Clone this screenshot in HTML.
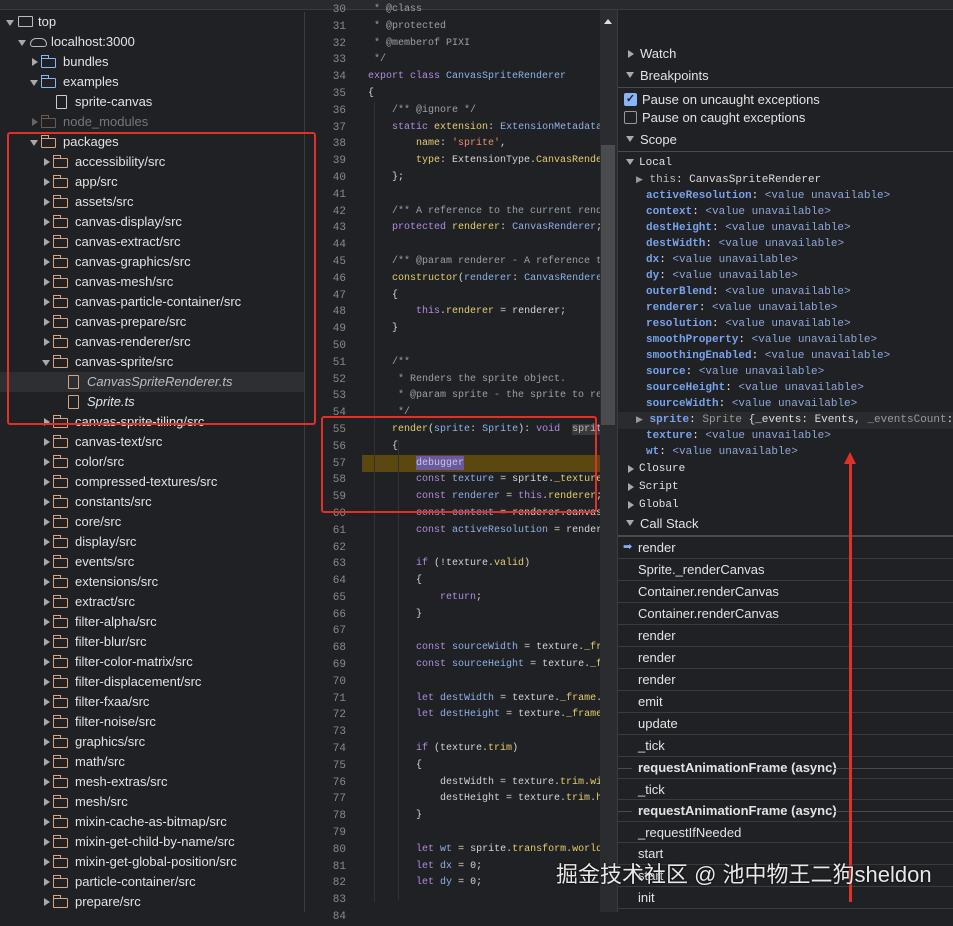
<!DOCTYPE html>
<html><head><meta charset="utf-8"><style>
*{margin:0;padding:0;box-sizing:border-box}
body{width:953px;height:912px;overflow:hidden;background:#202124;font-family:"Liberation Sans",sans-serif;color:#e3e3e3;position:relative}
.abs{position:absolute}
#top{left:0;top:0;width:953px;height:10px;background:#292a2d;border-bottom:1px solid #3c3c3c}
#tree{left:0;top:12px;width:305px;height:900px;background:#202124;border-right:1px solid #3c3c3c;overflow:hidden}
.r{position:absolute;left:0;right:0;height:20px;font-size:13px;line-height:20px;white-space:nowrap}
.r span.t{position:absolute}
.ar{position:absolute;top:6px;width:0;height:0;border-left:6px solid #a9a9a9;border-top:4px solid transparent;border-bottom:4px solid transparent}
.dn{position:absolute;top:8px;width:0;height:0;border-top:6px solid #a9a9a9;border-left:4px solid transparent;border-right:4px solid transparent}
.f{position:absolute;top:6px;width:15px;height:10px;border:1.5px solid #d9a37f;border-radius:1px}
.f::before{content:"";position:absolute;left:-1.5px;top:-4px;width:6px;height:3px;border:1.5px solid;border-color:inherit;border-bottom:none}
.fb{border-color:#8ab4f8}
.fi{position:absolute;top:3px;width:11px;height:14px;border:1.5px solid #d9a37f;border-radius:1px}
#code{left:306px;top:10px;width:294px;height:902px;background:#202124;overflow:hidden}
#gut{left:306px;top:2px;width:40px;text-align:right;font-family:"Liberation Mono",monospace;font-size:11px;line-height:16.8px;color:#8a8a8a}
#src{left:368px;top:2px;width:232px;font-family:"Liberation Mono",monospace;font-size:10px;line-height:16.8px;color:#d4d4d4;white-space:pre;overflow:hidden}
.k{color:#b08be0}.c{color:#9aa0a6}.n{color:#8fb0e6}.p{color:#e4cd6e}.s{color:#ee8a6a}
#sb{left:600px;top:10px;width:17px;height:902px;background:#2b2c2f}
#right{left:617px;top:10px;width:336px;height:902px;background:#202124;border-left:1px solid #3c3c3c;overflow:hidden}
.h{position:absolute;left:0;right:0;font-size:13px;line-height:18px}
.h .ar,.h .dn{top:5px}
.sep{position:absolute;left:0;right:0;height:1px;background:#4a4a4a}
.mono{font-family:"Liberation Mono",monospace;font-size:11px}
#scope{position:absolute;left:28px;top:162px;line-height:16px;white-space:nowrap}
#scope b{color:#7aa2e8}
#scope i{font-style:normal;color:#8fa6d6}
.cs{position:absolute;left:0;right:0;height:22px;border-bottom:1px solid #3a3b3e;font-size:13px;line-height:21px;padding-left:20px;white-space:nowrap}
.cs.b{font-weight:bold;border-bottom:none}
.cs.b::before{content:"";position:absolute;left:0;width:14px;top:11px;height:1px;background:#4a4a4a}
.cs.b::after{content:"";position:absolute;left:216px;right:0;top:11px;height:1px;background:#4a4a4a}
.red{position:absolute;border:2.5px solid #e0302a;border-radius:3px}
</style></head><body>
<div id="top" class="abs"></div>

<div id="tree" class="abs">
<div class="r" style="top:0px"><div class="dn" style="left:6px"></div><div class="abs" style="left:18px;top:4px;width:15px;height:11px;border:1.5px solid #bbb;border-radius:1px"></div><span class="t" style="left:38px">top</span></div>
<div class="r" style="top:20px"><div class="dn" style="left:18px"></div><div class="abs" style="left:30px;top:6px;width:17px;height:9px;border:1.5px solid #bbb;border-radius:6px 6px 3px 3px"></div><span class="t" style="left:51px">localhost:3000</span></div>
<div class="r" style="top:40px"><div class="ar" style="left:32px"></div><div class="f fb" style="left:41px"></div><span class="t" style="left:63px">bundles</span></div>
<div class="r" style="top:60px"><div class="dn" style="left:30px"></div><div class="f fb" style="left:41px"></div><span class="t" style="left:63px">examples</span></div>
<div class="r" style="top:80px"><div class="fi" style="left:56px;border-color:#ccc"></div><span class="t" style="left:75px">sprite-canvas</span></div>
<div class="r" style="top:100px;color:#777"><div class="ar" style="left:32px;border-left-color:#666"></div><div class="f" style="left:41px;border-color:#6d5a4d"></div><span class="t" style="left:63px">node_modules</span></div>
<div class="r" style="top:120px"><div class="dn" style="left:30px"></div><div class="f" style="left:41px"></div><span class="t" style="left:63px">packages</span></div>
<div class="r" style="top:140px"><div class="ar" style="left:44px"></div><div class="f" style="left:53px"></div><span class="t" style="left:75px">accessibility/src</span></div>
<div class="r" style="top:160px"><div class="ar" style="left:44px"></div><div class="f" style="left:53px"></div><span class="t" style="left:75px">app/src</span></div>
<div class="r" style="top:180px"><div class="ar" style="left:44px"></div><div class="f" style="left:53px"></div><span class="t" style="left:75px">assets/src</span></div>
<div class="r" style="top:200px"><div class="ar" style="left:44px"></div><div class="f" style="left:53px"></div><span class="t" style="left:75px">canvas-display/src</span></div>
<div class="r" style="top:220px"><div class="ar" style="left:44px"></div><div class="f" style="left:53px"></div><span class="t" style="left:75px">canvas-extract/src</span></div>
<div class="r" style="top:240px"><div class="ar" style="left:44px"></div><div class="f" style="left:53px"></div><span class="t" style="left:75px">canvas-graphics/src</span></div>
<div class="r" style="top:260px"><div class="ar" style="left:44px"></div><div class="f" style="left:53px"></div><span class="t" style="left:75px">canvas-mesh/src</span></div>
<div class="r" style="top:280px"><div class="ar" style="left:44px"></div><div class="f" style="left:53px"></div><span class="t" style="left:75px">canvas-particle-container/src</span></div>
<div class="r" style="top:300px"><div class="ar" style="left:44px"></div><div class="f" style="left:53px"></div><span class="t" style="left:75px">canvas-prepare/src</span></div>
<div class="r" style="top:320px"><div class="ar" style="left:44px"></div><div class="f" style="left:53px"></div><span class="t" style="left:75px">canvas-renderer/src</span></div>
<div class="r" style="top:340px"><div class="dn" style="left:42px"></div><div class="f" style="left:53px"></div><span class="t" style="left:75px">canvas-sprite/src</span></div>
<div class="r" style="top:360px;background:#2e2f33;color:#bdbdbd;font-style:italic"><div class="fi" style="left:68px"></div><span class="t" style="left:87px">CanvasSpriteRenderer.ts</span></div>
<div class="r" style="top:380px;font-style:italic"><div class="fi" style="left:68px"></div><span class="t" style="left:87px">Sprite.ts</span></div>
<div class="r" style="top:400px"><div class="ar" style="left:44px"></div><div class="f" style="left:53px"></div><span class="t" style="left:75px">canvas-sprite-tiling/src</span></div>
<div class="r" style="top:420px"><div class="ar" style="left:44px"></div><div class="f" style="left:53px"></div><span class="t" style="left:75px">canvas-text/src</span></div>
<div class="r" style="top:440px"><div class="ar" style="left:44px"></div><div class="f" style="left:53px"></div><span class="t" style="left:75px">color/src</span></div>
<div class="r" style="top:460px"><div class="ar" style="left:44px"></div><div class="f" style="left:53px"></div><span class="t" style="left:75px">compressed-textures/src</span></div>
<div class="r" style="top:480px"><div class="ar" style="left:44px"></div><div class="f" style="left:53px"></div><span class="t" style="left:75px">constants/src</span></div>
<div class="r" style="top:500px"><div class="ar" style="left:44px"></div><div class="f" style="left:53px"></div><span class="t" style="left:75px">core/src</span></div>
<div class="r" style="top:520px"><div class="ar" style="left:44px"></div><div class="f" style="left:53px"></div><span class="t" style="left:75px">display/src</span></div>
<div class="r" style="top:540px"><div class="ar" style="left:44px"></div><div class="f" style="left:53px"></div><span class="t" style="left:75px">events/src</span></div>
<div class="r" style="top:560px"><div class="ar" style="left:44px"></div><div class="f" style="left:53px"></div><span class="t" style="left:75px">extensions/src</span></div>
<div class="r" style="top:580px"><div class="ar" style="left:44px"></div><div class="f" style="left:53px"></div><span class="t" style="left:75px">extract/src</span></div>
<div class="r" style="top:600px"><div class="ar" style="left:44px"></div><div class="f" style="left:53px"></div><span class="t" style="left:75px">filter-alpha/src</span></div>
<div class="r" style="top:620px"><div class="ar" style="left:44px"></div><div class="f" style="left:53px"></div><span class="t" style="left:75px">filter-blur/src</span></div>
<div class="r" style="top:640px"><div class="ar" style="left:44px"></div><div class="f" style="left:53px"></div><span class="t" style="left:75px">filter-color-matrix/src</span></div>
<div class="r" style="top:660px"><div class="ar" style="left:44px"></div><div class="f" style="left:53px"></div><span class="t" style="left:75px">filter-displacement/src</span></div>
<div class="r" style="top:680px"><div class="ar" style="left:44px"></div><div class="f" style="left:53px"></div><span class="t" style="left:75px">filter-fxaa/src</span></div>
<div class="r" style="top:700px"><div class="ar" style="left:44px"></div><div class="f" style="left:53px"></div><span class="t" style="left:75px">filter-noise/src</span></div>
<div class="r" style="top:720px"><div class="ar" style="left:44px"></div><div class="f" style="left:53px"></div><span class="t" style="left:75px">graphics/src</span></div>
<div class="r" style="top:740px"><div class="ar" style="left:44px"></div><div class="f" style="left:53px"></div><span class="t" style="left:75px">math/src</span></div>
<div class="r" style="top:760px"><div class="ar" style="left:44px"></div><div class="f" style="left:53px"></div><span class="t" style="left:75px">mesh-extras/src</span></div>
<div class="r" style="top:780px"><div class="ar" style="left:44px"></div><div class="f" style="left:53px"></div><span class="t" style="left:75px">mesh/src</span></div>
<div class="r" style="top:800px"><div class="ar" style="left:44px"></div><div class="f" style="left:53px"></div><span class="t" style="left:75px">mixin-cache-as-bitmap/src</span></div>
<div class="r" style="top:820px"><div class="ar" style="left:44px"></div><div class="f" style="left:53px"></div><span class="t" style="left:75px">mixin-get-child-by-name/src</span></div>
<div class="r" style="top:840px"><div class="ar" style="left:44px"></div><div class="f" style="left:53px"></div><span class="t" style="left:75px">mixin-get-global-position/src</span></div>
<div class="r" style="top:860px"><div class="ar" style="left:44px"></div><div class="f" style="left:53px"></div><span class="t" style="left:75px">particle-container/src</span></div>
<div class="r" style="top:880px"><div class="ar" style="left:44px"></div><div class="f" style="left:53px"></div><span class="t" style="left:75px">prepare/src</span></div>
</div>

<div id="code" class="abs"></div>
<div class="abs" style="left:362px;top:455px;width:238px;height:17px;background:#5a4810"></div>
<div class="abs" style="left:416px;top:456px;width:48px;height:14px;background:#6a5a9c"></div>
<div class="abs" style="left:374px;top:102px;width:1px;height:800px;background:#333"></div>
<div class="abs" style="left:398px;top:440px;width:1px;height:460px;background:#333"></div>
<div id="gut" class="abs">30<br>31<br>32<br>33<br>34<br>35<br>36<br>37<br>38<br>39<br>40<br>41<br>42<br>43<br>44<br>45<br>46<br>47<br>48<br>49<br>50<br>51<br>52<br>53<br>54<br>55<br>56<br>57<br>58<br>59<br>60<br>61<br>62<br>63<br>64<br>65<br>66<br>67<br>68<br>69<br>70<br>71<br>72<br>73<br>74<br>75<br>76<br>77<br>78<br>79<br>80<br>81<br>82<br>83<br>84</div>
<div id="src" class="abs"><span class="c"> * @class</span>
<span class="c"> * @protected</span>
<span class="c"> * @memberof PIXI</span>
<span class="c"> */</span>
<span class="k">export class</span> <span class="n">CanvasSpriteRenderer</span>
{
    <span class="c">/** @ignore */</span>
    <span class="k">static</span> <span class="p">extension</span>: <span class="n">ExtensionMetadata</span> = {
        <span class="p">name</span>: <span class="s">'sprite'</span>,
        <span class="p">type</span>: ExtensionType.<span class="p">CanvasRenderer</span>
    };

    <span class="c">/** A reference to the current renderer */</span>
    <span class="k">protected</span> <span class="p">renderer</span>: <span class="n">CanvasRenderer</span>;

    <span class="c">/** @param renderer - A reference to */</span>
    <span class="p">constructor</span>(<span class="n">renderer</span>: <span class="n">CanvasRenderer</span>)
    {
        <span class="k">this</span>.<span class="p">renderer</span> = renderer;
    }

    <span class="c">/**</span>
<span class="c">     * Renders the sprite object.</span>
<span class="c">     * @param sprite - the sprite to render</span>
<span class="c">     */</span>
    <span class="p">render</span>(<span class="n">sprite</span>: <span class="n">Sprite</span>): <span class="k">void</span>  <span style="background:#3a3a3d;color:#bbb">sprite</span>
    {
        <span style="color:#c9c3e8">debugger</span>
        <span class="k">const</span> <span class="n">texture</span> = sprite.<span class="p">_texture</span>;
        <span class="k">const</span> <span class="n">renderer</span> = <span class="k">this</span>.<span class="p">renderer</span>;
        <span class="k">const</span> <span class="n">context</span> = renderer.canvasContext;
        <span class="k">const</span> <span class="n">activeResolution</span> = renderer;

        <span class="k">if</span> (!texture.<span class="p">valid</span>)
        {
            <span class="k">return</span>;
        }

        <span class="k">const</span> <span class="n">sourceWidth</span> = texture.<span class="p">_frame</span>;
        <span class="k">const</span> <span class="n">sourceHeight</span> = texture.<span class="p">_frame</span>;

        <span class="k">let</span> <span class="n">destWidth</span> = texture.<span class="p">_frame</span>.width;
        <span class="k">let</span> <span class="n">destHeight</span> = texture.<span class="p">_frame</span>.h;

        <span class="k">if</span> (texture.<span class="p">trim</span>)
        {
            destWidth = texture.<span class="p">trim</span>.<span class="p">width</span>;
            destHeight = texture.<span class="p">trim</span>.<span class="p">height</span>;
        }

        <span class="k">let</span> <span class="n">wt</span> = sprite.<span class="p">transform</span>.<span class="p">worldTransform</span>;
        <span class="k">let</span> <span class="n">dx</span> = 0;
        <span class="k">let</span> <span class="n">dy</span> = 0;

</div>
<div id="sb" class="abs"><div class="abs" style="left:1px;top:135px;width:14px;height:280px;background:#4a4b4e"></div><div class="abs" style="left:4px;top:9px;border-bottom:5px solid #ddd;border-left:4px solid transparent;border-right:4px solid transparent;width:0;height:0"></div></div>

<div id="right" class="abs">
<div class="h" style="top:35px"><div class="ar" style="left:10px"></div><span class="abs" style="left:22px">Watch</span></div>
<div class="h" style="top:57px"><div class="dn" style="left:8px"></div><span class="abs" style="left:22px">Breakpoints</span></div>
<div class="sep" style="top:77px"></div>
<div class="h" style="top:81px"><div class="abs" style="left:6px;top:2px;width:13px;height:13px;background:#8ab4f8;border-radius:2px;color:#202124;font-size:11px;line-height:13px;text-align:center;font-weight:bold">✓</div><span class="abs" style="left:24px">Pause on uncaught exceptions</span></div>
<div class="h" style="top:99px"><div class="abs" style="left:6px;top:2px;width:13px;height:13px;border:1.5px solid #999;border-radius:2px"></div><span class="abs" style="left:24px">Pause on caught exceptions</span></div>
<div class="h" style="top:121px"><div class="dn" style="left:8px"></div><span class="abs" style="left:22px">Scope</span></div>
<div class="sep" style="top:141px"></div>
<div class="h mono" style="top:144px"><div class="dn" style="left:8px"></div><span class="abs" style="left:21px">Local</span></div>
<div class="abs" style="left:0;right:0;top:402px;height:17px;background:#2a2b2e"></div>
<div id="scope" class="mono"><span style="margin-left:-10px;color:#999;font-size:9px">▶</span> <span style="color:#bbb">this</span>: <span style="color:#ddd">CanvasSpriteRenderer</span><br>
<b>activeResolution</b>: <i>&lt;value unavailable&gt;</i><br>
<b>context</b>: <i>&lt;value unavailable&gt;</i><br>
<b>destHeight</b>: <i>&lt;value unavailable&gt;</i><br>
<b>destWidth</b>: <i>&lt;value unavailable&gt;</i><br>
<b>dx</b>: <i>&lt;value unavailable&gt;</i><br>
<b>dy</b>: <i>&lt;value unavailable&gt;</i><br>
<b>outerBlend</b>: <i>&lt;value unavailable&gt;</i><br>
<b>renderer</b>: <i>&lt;value unavailable&gt;</i><br>
<b>resolution</b>: <i>&lt;value unavailable&gt;</i><br>
<b>smoothProperty</b>: <i>&lt;value unavailable&gt;</i><br>
<b>smoothingEnabled</b>: <i>&lt;value unavailable&gt;</i><br>
<b>source</b>: <i>&lt;value unavailable&gt;</i><br>
<b>sourceHeight</b>: <i>&lt;value unavailable&gt;</i><br>
<b>sourceWidth</b>: <i>&lt;value unavailable&gt;</i><br>
<span style="margin-left:-10px;color:#999;font-size:9px">▶</span> <b>sprite</b>: <span style="color:#999">Sprite</span>  <span style="color:#ddd">{_events: Events, <span style="color:#999">_eventsCount</span>: <span style="color:#9e9ef0">0</span>,</span><br>
<b>texture</b>: <i>&lt;value unavailable&gt;</i><br>
<b>wt</b>: <i>&lt;value unavailable&gt;</i></div>
<div class="h mono" style="top:450px"><div class="ar" style="left:10px"></div><span class="abs" style="left:21px">Closure</span></div>
<div class="h mono" style="top:468px"><div class="ar" style="left:10px"></div><span class="abs" style="left:21px">Script</span></div>
<div class="h mono" style="top:486px"><div class="ar" style="left:10px"></div><span class="abs" style="left:21px">Global</span></div>
<div class="h" style="top:505px"><div class="dn" style="left:8px"></div><span class="abs" style="left:22px">Call Stack</span></div>
<div class="sep" style="top:525px;height:2px"></div>
<div class="cs" style="top:527px"><span class="abs" style="left:5px;color:#8ab4f8;font-size:11px">➡</span>render</div>
<div class="cs" style="top:549px">Sprite._renderCanvas</div>
<div class="cs" style="top:571px">Container.renderCanvas</div>
<div class="cs" style="top:593px">Container.renderCanvas</div>
<div class="cs" style="top:615px">render</div>
<div class="cs" style="top:637px">render</div>
<div class="cs" style="top:659px">render</div>
<div class="cs" style="top:681px">emit</div>
<div class="cs" style="top:703px">update</div>
<div class="cs" style="top:725px">_tick</div>
<div class="cs b" style="top:747px">requestAnimationFrame (async)</div>
<div class="cs" style="top:768px;border-top:1px solid #3a3b3e">_tick</div>
<div class="cs b" style="top:790px">requestAnimationFrame (async)</div>
<div class="cs" style="top:811px;border-top:1px solid #3a3b3e">_requestIfNeeded</div>
<div class="cs" style="top:833px">start</div>
<div class="cs" style="top:855px">start</div>
<div class="cs" style="top:877px">init</div>
</div>

<div class="red" style="left:7px;top:132px;width:309px;height:293px"></div>
<div class="red" style="left:321px;top:416px;width:276px;height:97px"></div>
<div class="abs" style="left:849px;top:462px;width:3px;height:440px;background:#e0302a"></div>
<div class="abs" style="left:844px;top:452px;width:0;height:0;border-bottom:12px solid #e0302a;border-left:6.5px solid transparent;border-right:6.5px solid transparent"></div>
<div class="abs" style="left:556px;top:860px;font-size:22px;line-height:30px;color:#e8e8e8;font-family:'Liberation Sans','Noto Sans CJK SC',sans-serif;text-shadow:0 0 2px #000;white-space:nowrap">掘金技术社区 @ 池中物王二狗sheldon</div>
</body></html>
